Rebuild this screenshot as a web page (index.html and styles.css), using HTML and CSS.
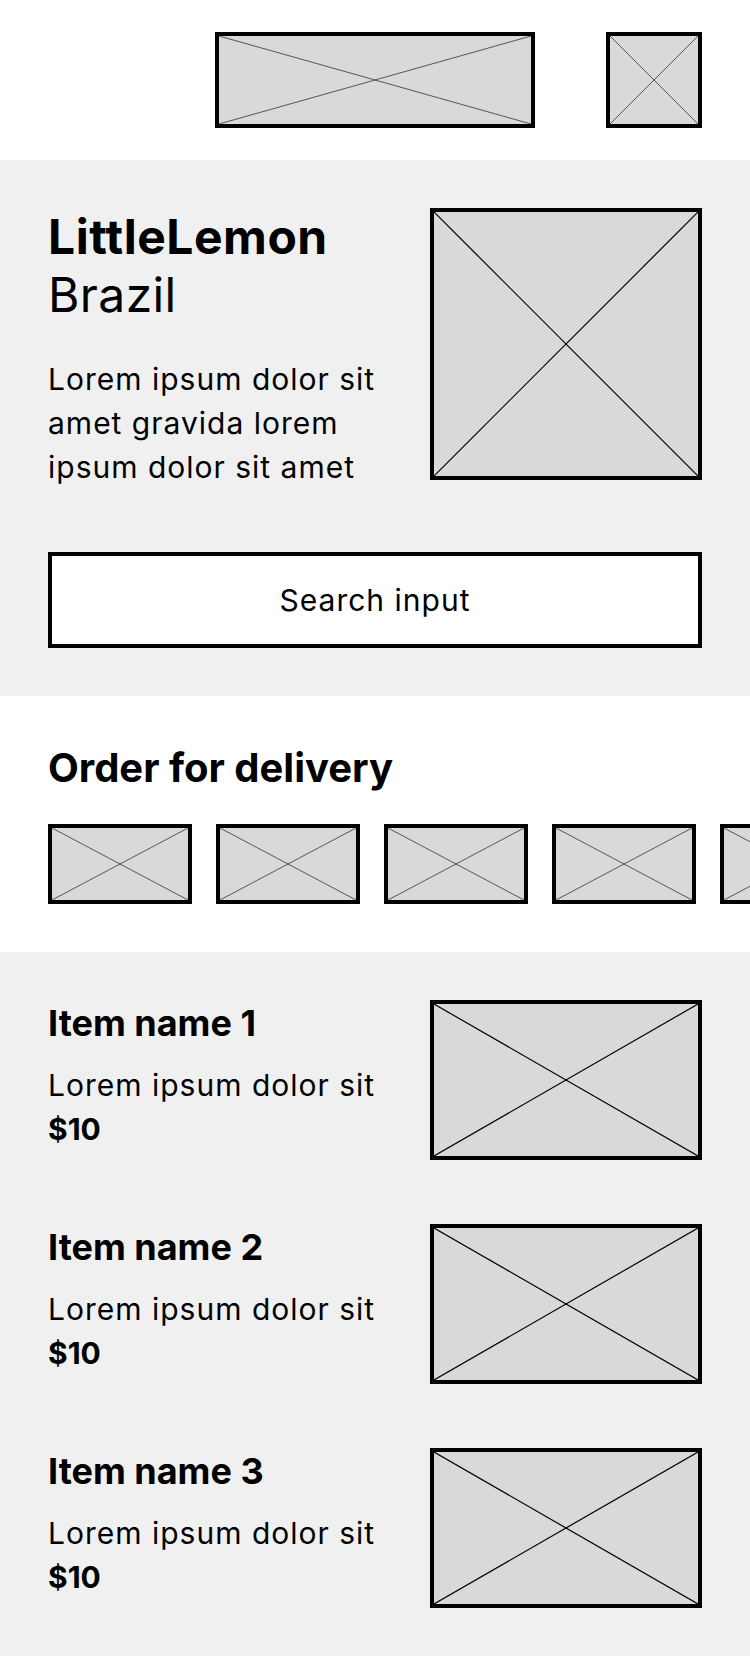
FILE: index.html
```html
<!DOCTYPE html>
<html lang="en">
<head>
    <meta charset="UTF-8">
    <meta name="viewport" content="width=device-width, initial-scale=1.0">
    <title>Little Lemon</title>
    <link rel="stylesheet" href="styles.css">
</head>
<body>

<header class="top-bar">
    <div class="ph logo">
        <svg viewBox="0 0 100 100" preserveAspectRatio="none"><line x1="0" y1="0" x2="100" y2="100"/><line x1="100" y1="0" x2="0" y2="100"/></svg>
    </div>
    <div class="ph icon">
        <svg viewBox="0 0 100 100" preserveAspectRatio="none"><line x1="0" y1="0" x2="100" y2="100"/><line x1="100" y1="0" x2="0" y2="100"/></svg>
    </div>
</header>

<section class="hero">
    <div class="hero-row">
        <div class="hero-text">
            <h1>LittleLemon</h1>
            <h2>Brazil</h2>
            <p>Lorem ipsum dolor sit amet gravida lorem ipsum dolor sit amet</p>
        </div>
        <div class="ph hero-img">
            <svg viewBox="0 0 100 100" preserveAspectRatio="none"><line x1="0" y1="0" x2="100" y2="100"/><line x1="100" y1="0" x2="0" y2="100"/></svg>
        </div>
    </div>
    <div class="search">Search input</div>
</section>

<section class="delivery">
    <h3>Order for delivery</h3>
    <div class="thumbs">
        <div class="ph thumb"><svg viewBox="0 0 100 100" preserveAspectRatio="none"><line x1="0" y1="0" x2="100" y2="100"/><line x1="100" y1="0" x2="0" y2="100"/></svg></div>
        <div class="ph thumb"><svg viewBox="0 0 100 100" preserveAspectRatio="none"><line x1="0" y1="0" x2="100" y2="100"/><line x1="100" y1="0" x2="0" y2="100"/></svg></div>
        <div class="ph thumb"><svg viewBox="0 0 100 100" preserveAspectRatio="none"><line x1="0" y1="0" x2="100" y2="100"/><line x1="100" y1="0" x2="0" y2="100"/></svg></div>
        <div class="ph thumb"><svg viewBox="0 0 100 100" preserveAspectRatio="none"><line x1="0" y1="0" x2="100" y2="100"/><line x1="100" y1="0" x2="0" y2="100"/></svg></div>
        <div class="ph thumb"><svg viewBox="0 0 100 100" preserveAspectRatio="none"><line x1="0" y1="0" x2="100" y2="100"/><line x1="100" y1="0" x2="0" y2="100"/></svg></div>
    </div>
</section>

<section class="menu">
    <div class="menu-item">
        <div class="item-text">
            <h4>Item name 1</h4>
            <p>Lorem ipsum dolor sit</p>
            <p class="price">$10</p>
        </div>
        <div class="ph item-img"><svg viewBox="0 0 100 100" preserveAspectRatio="none"><line x1="0" y1="0" x2="100" y2="100"/><line x1="100" y1="0" x2="0" y2="100"/></svg></div>
    </div>
    <div class="menu-item">
        <div class="item-text">
            <h4>Item name 2</h4>
            <p>Lorem ipsum dolor sit</p>
            <p class="price">$10</p>
        </div>
        <div class="ph item-img"><svg viewBox="0 0 100 100" preserveAspectRatio="none"><line x1="0" y1="0" x2="100" y2="100"/><line x1="100" y1="0" x2="0" y2="100"/></svg></div>
    </div>
    <div class="menu-item">
        <div class="item-text">
            <h4>Item name 3</h4>
            <p>Lorem ipsum dolor sit</p>
            <p class="price">$10</p>
        </div>
        <div class="ph item-img"><svg viewBox="0 0 100 100" preserveAspectRatio="none"><line x1="0" y1="0" x2="100" y2="100"/><line x1="100" y1="0" x2="0" y2="100"/></svg></div>
    </div>
</section>

</body>
</html>
```

FILE: styles.css
```css
body { margin: 0; font-family: Inter, "Noto Sans", sans-serif; color: #000; background-color: #fff; }
h1, h2, h3, h4, p { margin: 0; }

/* image placeholders: grey box with a cross */
.ph { box-sizing: border-box; border: 4px solid #000; background-color: #d9d9d9; flex: none; }
.ph svg { display: block; width: 100%; height: 100%; }
.ph line { stroke: #000; stroke-width: 1.2; vector-effect: non-scaling-stroke; }
.logo line, .icon line, .thumb line { stroke: #333; stroke-width: 0.8; }

.top-bar { display: grid; grid-template-columns: 1fr auto 1fr; align-items: center; padding: 32px 48px; }
.logo { grid-column: 2; width: 320px; height: 96px; }
.icon { grid-column: 3; justify-self: end; width: 96px; height: 96px; }

.hero { background-color: #f0f0f0; padding: 48px; }
.hero-row { display: flex; justify-content: space-between; align-items: flex-start; }
.hero-text h1 { font-size: 48px; font-weight: 700; line-height: 58px; letter-spacing: 0.5px; }
.hero-text h2 { font-size: 48px; font-weight: 400; line-height: 58px; letter-spacing: 0.4px; }
.hero-text p { font-size: 30px; line-height: 44px; margin-top: 33px; max-width: 350px; letter-spacing: 1px; }
.hero-img { width: 272px; height: 272px; }
.search { box-sizing: border-box; height: 96px; margin-top: 63px; border: 4px solid #000; background-color: #fff; display: flex; align-items: center; justify-content: center; font-size: 30px; letter-spacing: 1px; }

.delivery { padding: 48px; overflow: hidden; }
.delivery h3 { font-size: 40px; font-weight: 700; line-height: 48px; }
.thumbs { display: flex; gap: 24px; margin-top: 32px; margin-right: -48px; overflow: hidden; }
.thumb { width: 144px; height: 80px; }

.menu { background-color: #f0f0f0; padding: 48px; display: flex; flex-direction: column; gap: 64px; }
.menu-item { display: flex; justify-content: space-between; align-items: flex-start; }
.item-text { padding-top: 1px; }
.item-text h4 { font-size: 36px; font-weight: 700; line-height: 44px; margin-bottom: 19px; }
.item-text p { font-size: 30px; line-height: 43.5px; letter-spacing: 1px; }
.item-text .price { font-weight: 700; letter-spacing: 0; }
.item-img { width: 272px; height: 160px; }
```
